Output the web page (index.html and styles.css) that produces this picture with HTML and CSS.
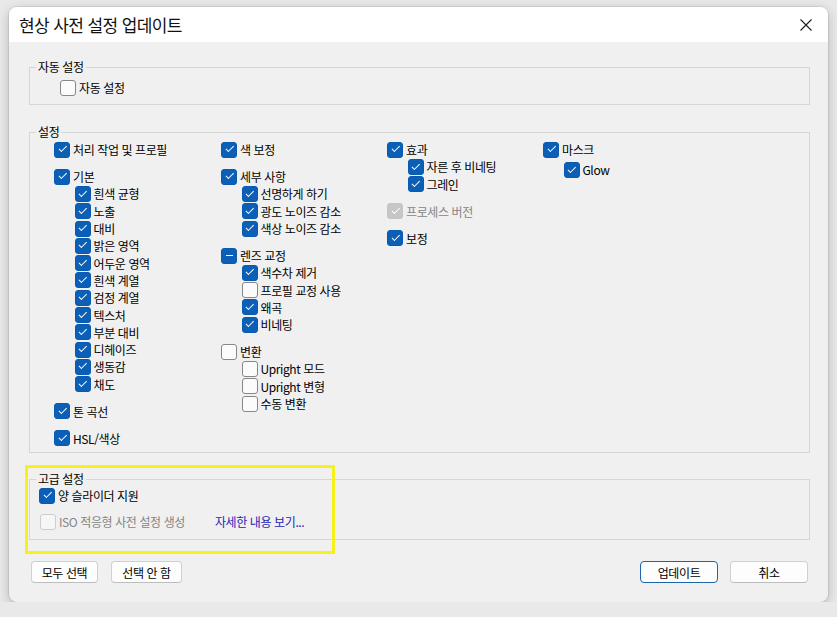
FILE: index.html
```html
<!DOCTYPE html>
<html lang="ko">
<head>
    <meta charset="UTF-8">
    <title>현상 사전 설정 업데이트</title>
    <link rel="stylesheet" href="styles.css">
</head>
<body>
    <div class="dialog">
        <div class="titlebar">
            <span class="title">현상 사전 설정 업데이트</span>
            <span class="close">
                <svg width="12" height="12" viewBox="0 0 12 12"><path d="M0.5 0.5 L11.5 11.5 M11.5 0.5 L0.5 11.5" stroke="#1b1b1b" stroke-width="1.1" fill="none"/></svg>
            </span>
        </div>

        <div class="content">
            <div class="group group-auto">
                <div class="legend">자동 설정</div>
                <div class="group-body">
                    <div class="row"><span class="cb"></span>자동 설정</div>
                </div>
            </div>

            <div class="group group-main">
                <div class="legend">설정</div>
                <div class="group-body columns">
                    <div class="col">
                        <div class="block">
                            <div class="row"><span class="cb on"></span>처리 작업 및 프로필</div>
                        </div>
                        <div class="block">
                            <div class="row"><span class="cb on"></span>기본</div>
                            <div class="sub">
                                <div class="row"><span class="cb on"></span>흰색 균형</div>
                                <div class="row"><span class="cb on"></span>노출</div>
                                <div class="row"><span class="cb on"></span>대비</div>
                                <div class="row"><span class="cb on"></span>밝은 영역</div>
                                <div class="row"><span class="cb on"></span>어두운 영역</div>
                                <div class="row"><span class="cb on"></span>흰색 계열</div>
                                <div class="row"><span class="cb on"></span>검정 계열</div>
                                <div class="row"><span class="cb on"></span>텍스처</div>
                                <div class="row"><span class="cb on"></span>부분 대비</div>
                                <div class="row"><span class="cb on"></span>디헤이즈</div>
                                <div class="row"><span class="cb on"></span>생동감</div>
                                <div class="row"><span class="cb on"></span>채도</div>
                            </div>
                        </div>
                        <div class="block">
                            <div class="row"><span class="cb on"></span>톤 곡선</div>
                        </div>
                        <div class="block">
                            <div class="row"><span class="cb on"></span>HSL/색상</div>
                        </div>
                    </div>

                    <div class="col">
                        <div class="block">
                            <div class="row"><span class="cb on"></span>색 보정</div>
                        </div>
                        <div class="block">
                            <div class="row"><span class="cb on"></span>세부 사항</div>
                            <div class="sub">
                                <div class="row"><span class="cb on"></span>선명하게 하기</div>
                                <div class="row"><span class="cb on"></span>광도 노이즈 감소</div>
                                <div class="row"><span class="cb on"></span>색상 노이즈 감소</div>
                            </div>
                        </div>
                        <div class="block">
                            <div class="row"><span class="cb mixed"></span>렌즈 교정</div>
                            <div class="sub">
                                <div class="row"><span class="cb on"></span>색수차 제거</div>
                                <div class="row"><span class="cb"></span>프로필 교정 사용</div>
                                <div class="row"><span class="cb on"></span>왜곡</div>
                                <div class="row"><span class="cb on"></span>비네팅</div>
                            </div>
                        </div>
                        <div class="block">
                            <div class="row"><span class="cb"></span>변환</div>
                            <div class="sub">
                                <div class="row"><span class="cb"></span>Upright 모드</div>
                                <div class="row"><span class="cb"></span>Upright 변형</div>
                                <div class="row"><span class="cb"></span>수동 변환</div>
                            </div>
                        </div>
                    </div>

                    <div class="col">
                        <div class="block">
                            <div class="row"><span class="cb on"></span>효과</div>
                            <div class="sub">
                                <div class="row"><span class="cb on"></span>자른 후 비네팅</div>
                                <div class="row"><span class="cb on"></span>그레인</div>
                            </div>
                        </div>
                        <div class="block">
                            <div class="row disabled"><span class="cb on dis"></span>프로세스 버전</div>
                        </div>
                        <div class="block">
                            <div class="row"><span class="cb on"></span>보정</div>
                        </div>
                    </div>

                    <div class="col">
                        <div class="block">
                            <div class="row"><span class="cb on"></span>마스크</div>
                            <div class="sub sub-mask">
                                <div class="row"><span class="cb on"></span>Glow</div>
                            </div>
                        </div>
                    </div>
                </div>
            </div>

            <div class="group group-adv">
                <div class="legend">고급 설정</div>
                <div class="group-body">
                    <div class="row"><span class="cb on"></span>양 슬라이더 지원</div>
                    <div class="row row-iso">
                        <span class="disabled iso"><span class="cb dis"></span>ISO 적응형 사전 설정 생성</span>
                        <a class="more" href="#">자세한 내용 보기...</a>
                    </div>
                </div>
            </div>

            <div class="actions">
                <div class="btn-group">
                    <button class="btn btn-all">모두 선택</button>
                    <button class="btn btn-none">선택 안 함</button>
                </div>
                <div class="btn-group">
                    <button class="btn btn-ok">업데이트</button>
                    <button class="btn btn-cancel">취소</button>
                </div>
            </div>
        </div>

        <div class="highlight"></div>
    </div>
</body>
</html>
```

FILE: styles.css
```css
* {
    box-sizing: border-box;
}
body {
    margin: 0;
    padding: 7px 0 0 9px;
    background-color: #e9e9e9;
    font-family: "Noto Sans CJK KR", "Malgun Gothic", sans-serif;
    font-size: 12px;
    letter-spacing: -0.4px;
    color: #000;
}
.dialog {
    position: relative;
    width: 819px;
    height: 595px;
    background-color: #f0f0f0;
    border-radius: 8px;
    box-shadow: 0 3px 12px rgba(0, 0, 0, 0.22), 0 0 0 1px rgba(0, 0, 0, 0.07);
    overflow: hidden;
}
.titlebar {
    height: 35px;
    background-color: #fff;
    display: flex;
    align-items: center;
    justify-content: space-between;
    padding: 0 16px 0 10px;
}
.title {
    font-size: 17px;
    letter-spacing: -0.6px;
    color: #111;
}
.close {
    display: flex;
    width: 12px;
    height: 12px;
}
.content {
    padding: 25px 18px 0 20px;
}

/* group boxes */
.group {
    border: 1px solid #d6d6d6;
}
.legend {
    width: fit-content;
    margin: -9px 0 0 6px;
    padding: 0 2px;
    line-height: 16px;
    background-color: #f0f0f0;
}
.group-auto {
    height: 38px;
}
.group-auto .group-body {
    padding: 4px 0 0 30px;
}
.group-main {
    height: 321px;
    margin-top: 27px;
}
.group-adv {
    height: 61px;
    margin-top: 26px;
}
.group-adv .group-body {
    padding-left: 9px;
}

/* checkbox rows */
.columns {
    display: grid;
    grid-template-columns: 167px 166px 156px auto;
    margin-top: 1px;
    padding-left: 24px;
}
.col {
    display: flex;
    flex-direction: column;
    gap: 9.7px;
}
.sub {
    margin-left: 20.5px;
}
.sub-mask {
    margin-top: 3px;
}
.row {
    display: flex;
    align-items: center;
    height: 17.3px;
    line-height: 17px;
    white-space: nowrap;
}
.cb {
    position: relative;
    flex: none;
    width: 16px;
    height: 16px;
    margin-right: 3px;
    border: 1px solid #878787;
    border-radius: 3px;
    background-color: #fbfbfb;
}
.cb.on,
.cb.mixed {
    border-color: #0a5bb0;
    background-color: #0c5fb6;
}
.cb.on::after {
    content: "";
    position: absolute;
    left: 3.6px;
    top: 3.6px;
    width: 6.5px;
    height: 3.4px;
    border-left: 1.2px solid #fff;
    border-bottom: 1.2px solid #fff;
    transform: rotate(-45deg);
}
.cb.mixed::after {
    content: "";
    position: absolute;
    left: 3.5px;
    top: 6.5px;
    width: 7px;
    height: 1.3px;
    background-color: #fff;
}
.cb.dis {
    border-color: #cdcdcd;
    background-color: #f6f6f6;
}
.cb.on.dis {
    border-color: #c4c4c4;
    background-color: #c6c6c6;
}
.disabled {
    color: #858585;
}
.iso {
    display: flex;
    align-items: center;
    margin-left: 1px;
}
.row-iso {
    margin-top: 8.7px;
}
.more {
    margin-left: 30px;
    color: #2424b8;
    text-decoration: none;
}

/* bottom buttons */
.actions {
    display: flex;
    justify-content: space-between;
    margin-top: 21px;
    padding: 0 2px;
}
.btn-group {
    display: flex;
    gap: 13px;
}
.btn-group + .btn-group {
    gap: 12px;
}
.btn {
    height: 22px;
    padding: 0;
    font-family: inherit;
    font-size: 12px;
    letter-spacing: -0.4px;
    color: #000;
    background-color: #fdfdfd;
    border: 1px solid #d0d0d0;
    border-bottom-color: #bdbdbd;
    border-radius: 4px;
}
.btn-all {
    width: 67px;
}
.btn-none {
    width: 71px;
}
.btn-ok,
.btn-cancel {
    width: 78px;
}
.btn-ok {
    border: 1px solid #1f63ad;
}

/* annotation box drawn over the screenshot */
.highlight {
    position: absolute;
    left: 16px;
    top: 458px;
    width: 310px;
    height: 89px;
    border: 3px solid #f8f01a;
}
```
